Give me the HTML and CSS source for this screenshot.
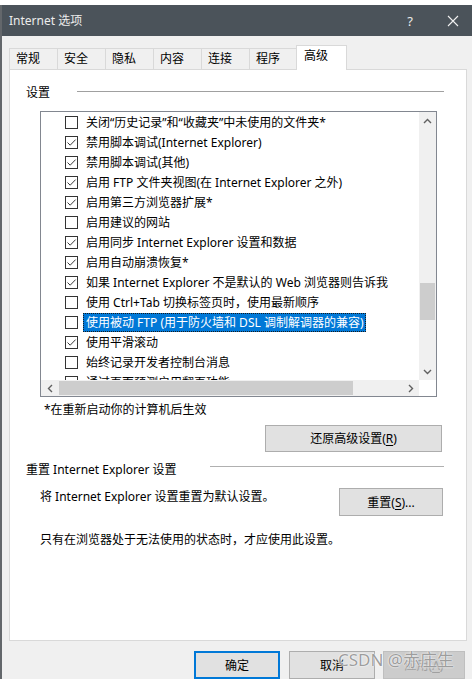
FILE: index.html
```html
<!DOCTYPE html>
<html lang="zh-CN">
<head>
<meta charset="utf-8">
<title>Internet 选项</title>
<link rel="stylesheet" href="styles.css">
</head>
<body>
<div class="topgap"></div>
<div class="window">
  <div class="titlebar">
    <span class="title">Internet 选项</span>
    <span class="help">?</span>
    <span class="close"><svg width="12" height="12" viewBox="0 0 12 12"><path d="M1 1 L11 11 M11 1 L1 11" stroke="#f2f2f2" stroke-width="1.1" fill="none"/></svg></span>
  </div>
  <div class="client">
    <div class="tabs">
      <div class="tab">常规</div>
      <div class="tab">安全</div>
      <div class="tab">隐私</div>
      <div class="tab">内容</div>
      <div class="tab">连接</div>
      <div class="tab">程序</div>
      <div class="tab tab-active">高级</div>
    </div>
    <div class="panel">
      <div class="group-head g1"><span>设置</span><i class="rule"></i></div>
      <div class="listbox">
        <div class="list-view">
          <div class="row"><span class="cb"></span><span class="lbl">关闭“历史记录”和“收藏夹”中未使用的文件夹*</span></div>
          <div class="row"><span class="cb on"><svg width="11" height="11" viewBox="0 0 11 11"><path d="M1.5 5.5 L4.2 8.2 L9.6 2.6" stroke="#3a3a3a" stroke-width="1" fill="none"/></svg></span><span class="lbl">禁用脚本调试(Internet Explorer)</span></div>
          <div class="row"><span class="cb on"><svg width="11" height="11" viewBox="0 0 11 11"><path d="M1.5 5.5 L4.2 8.2 L9.6 2.6" stroke="#3a3a3a" stroke-width="1" fill="none"/></svg></span><span class="lbl">禁用脚本调试(其他)</span></div>
          <div class="row"><span class="cb on"><svg width="11" height="11" viewBox="0 0 11 11"><path d="M1.5 5.5 L4.2 8.2 L9.6 2.6" stroke="#3a3a3a" stroke-width="1" fill="none"/></svg></span><span class="lbl">启用 FTP 文件夹视图(在 Internet Explorer 之外)</span></div>
          <div class="row"><span class="cb on"><svg width="11" height="11" viewBox="0 0 11 11"><path d="M1.5 5.5 L4.2 8.2 L9.6 2.6" stroke="#3a3a3a" stroke-width="1" fill="none"/></svg></span><span class="lbl">启用第三方浏览器扩展*</span></div>
          <div class="row"><span class="cb"></span><span class="lbl">启用建议的网站</span></div>
          <div class="row"><span class="cb on"><svg width="11" height="11" viewBox="0 0 11 11"><path d="M1.5 5.5 L4.2 8.2 L9.6 2.6" stroke="#3a3a3a" stroke-width="1" fill="none"/></svg></span><span class="lbl">启用同步 Internet Explorer 设置和数据</span></div>
          <div class="row"><span class="cb on"><svg width="11" height="11" viewBox="0 0 11 11"><path d="M1.5 5.5 L4.2 8.2 L9.6 2.6" stroke="#3a3a3a" stroke-width="1" fill="none"/></svg></span><span class="lbl">启用自动崩溃恢复*</span></div>
          <div class="row"><span class="cb on"><svg width="11" height="11" viewBox="0 0 11 11"><path d="M1.5 5.5 L4.2 8.2 L9.6 2.6" stroke="#3a3a3a" stroke-width="1" fill="none"/></svg></span><span class="lbl">如果 Internet Explorer 不是默认的 Web 浏览器则告诉我</span></div>
          <div class="row"><span class="cb"></span><span class="lbl">使用 Ctrl+Tab 切换标签页时，使用最新顺序</span></div>
          <div class="row"><span class="cb"></span><span class="lbl selected">使用被动 FTP (用于防火墙和 DSL 调制解调器的兼容)</span></div>
          <div class="row"><span class="cb on"><svg width="11" height="11" viewBox="0 0 11 11"><path d="M1.5 5.5 L4.2 8.2 L9.6 2.6" stroke="#3a3a3a" stroke-width="1" fill="none"/></svg></span><span class="lbl">使用平滑滚动</span></div>
          <div class="row"><span class="cb"></span><span class="lbl">始终记录开发者控制台消息</span></div>
          <div class="row"><span class="cb"></span><span class="lbl">通过页面预测启用翻页功能</span></div>
        </div>
        <div class="vscroll">
          <div class="sbtn"><svg width="9" height="6" viewBox="0 0 9 6"><path d="M1 5 L4.5 1.5 L8 5" stroke="#606060" stroke-width="1.4" fill="none"/></svg></div>
          <div class="vtrack"><div class="vthumb"></div></div>
          <div class="sbtn"><svg width="9" height="6" viewBox="0 0 9 6"><path d="M1 1 L4.5 4.5 L8 1" stroke="#606060" stroke-width="1.4" fill="none"/></svg></div>
        </div>
        <div class="hscroll">
          <div class="sbtn"><svg width="6" height="9" viewBox="0 0 6 9"><path d="M5 1 L1.5 4.5 L5 8" stroke="#606060" stroke-width="1.4" fill="none"/></svg></div>
          <div class="htrack"><div class="hthumb"></div></div>
          <div class="sbtn"><svg width="6" height="9" viewBox="0 0 6 9"><path d="M1 1 L4.5 4.5 L1 8" stroke="#606060" stroke-width="1.4" fill="none"/></svg></div>
        </div>
        <div class="corner"></div>
      </div>
      <div class="note">*在重新启动你的计算机后生效</div>
      <div class="btn-row"><button class="btn btn-restore">还原高级设置(<u>R</u>)</button></div>
      <div class="group-head g2"><span>重置 Internet Explorer 设置</span><i class="rule"></i></div>
      <div class="reset-row"><span class="reset-text">将 Internet Explorer 设置重置为默认设置。</span><button class="btn btn-reset">重置(<u>S</u>)...</button></div>
      <div class="hint">只有在浏览器处于无法使用的状态时，才应使用此设置。</div>
    </div>
    <div class="footer">
      <button class="btn fbtn btn-ok">确定</button>
      <button class="btn fbtn btn-cancel">取消</button>
      <button class="btn fbtn btn-apply" disabled>应用(<u>A</u>)</button>
    </div>
  </div>
</div>
<div class="watermark">CSDN @赤庄生</div>
</body>
</html>
```

FILE: styles.css
```css
* { box-sizing: border-box; }
html, body {
  margin: 0;
  padding: 0;
  width: 472px;
  height: 679px;
  overflow: hidden;
  background: #ffffff;
}
body {
  font-family: "Noto Sans", "Noto Sans CJK SC", sans-serif;
  font-size: 12px;
  color: #000;
  position: relative;
}
.topgap { height: 5px; background: #ffffff; }
.window {
  height: 674px;
  display: flex;
  flex-direction: column;
  border-left: 2px solid #63676b;
  background: #f0f0f0;
  overflow: hidden;
}
.titlebar {
  height: 31px;
  flex: none;
  background: #4b535a;
  display: flex;
  align-items: center;
  margin-left: -2px;
  padding-left: 9px;
  color: #ececec;
}
.title { font-size: 12px; line-height: 17px; flex: 1; }
.help {
  font-size: 13px;
  width: 16px;
  text-align: center;
  margin-right: 29px;
}
.close { width: 12px; height: 12px; display: flex; margin-right: 13px; }
.client {
  flex: 1;
  padding: 9px 5px 0 7px;
  display: flex;
  flex-direction: column;
}
.tabs {
  height: 24px;
  display: flex;
  align-items: flex-end;
}
.tab {
  width: 48px;
  height: 21px;
  border: 1px solid #d9d9d9;
  border-right: none;
  border-bottom: none;
  padding: 0 6px;
  line-height: 20px;
  background: #f0f0f0;
}
.tab-active {
  width: 51px;
  height: 25px;
  margin-left: -1px;
  margin-bottom: -1px;
  border-right: 1px solid #d9d9d9;
  background: #ffffff;
  position: relative;
  z-index: 1;
  padding: 0 7px;
  line-height: 20px;
}
.panel {
  width: 458px;
  height: 572px;
  flex: none;
  background: #ffffff;
  border: 1px solid #d9d9d9;
  display: flex;
  flex-direction: column;
}
.group-head {
  display: flex;
  align-items: center;
  height: 17px;
  line-height: 17px;
  padding-left: 16px;
  padding-right: 22px;
}
.g1 { margin-top: 14px; }
.g2 { margin-top: 9px; }
.rule {
  flex: 1;
  height: 1px;
  background: #a0a0a0;
  margin-bottom: 3px;
}
.g1 .rule { margin-left: 27px; }
.g2 .rule { margin-left: 33px; margin-bottom: 6px; background: #b0b0b0; }
.listbox {
  margin-top: 10px;
  margin-left: 30px;
  width: 397px;
  height: 286px;
  border: 1px solid #828790;
  display: grid;
  grid-template-columns: 378px 17px;
  grid-template-rows: 268px 16px;
}
.list-view {
  overflow: hidden;
  background: #ffffff;
}
.row {
  height: 20px;
  display: flex;
  align-items: center;
  padding-left: 24px;
  white-space: nowrap;
}
.cb {
  width: 13px;
  height: 13px;
  flex: none;
  border: 1px solid #333333;
  background: #ffffff;
  display: flex;
  align-items: center;
  justify-content: center;
}
.lbl {
  margin-left: 5px;
  padding: 0 2px;
  line-height: 17px;
  border: 1px solid transparent;
}
.selected {
  background: #0078d7;
  color: #ffffff;
  border: 1px dotted #1a1a1a;
}
.vscroll {
  background: #f0f0f0;
  display: flex;
  flex-direction: column;
}
.sbtn {
  width: 17px;
  height: 17px;
  flex: none;
  display: flex;
  align-items: center;
  justify-content: center;
}
.vtrack { flex: 1; }
.vthumb {
  margin-top: 154px;
  margin-left: 1px;
  width: 15px;
  height: 37px;
  background: #cdcdcd;
}
.hscroll {
  background: #f0f0f0;
  display: flex;
  align-items: center;
  height: 16px;
}
.hscroll .sbtn { height: 16px; }
.htrack { flex: 1; height: 16px; display: flex; align-items: center; }
.hthumb {
  margin-left: 1px;
  width: 294px;
  height: 14px;
  background: #cdcdcd;
}
.corner { background: #ffffff; }
.note {
  margin-top: 4px;
  margin-left: 34px;
  line-height: 17px;
}
.btn-row {
  display: flex;
  justify-content: flex-end;
  padding-right: 24px;
  margin-top: 7px;
}
.btn {
  font-family: "Noto Sans", "Noto Sans CJK SC", sans-serif;
  font-size: 12px;
  color: #000;
  background: #e1e1e1;
  border: 1px solid #adadad;
  padding: 0;
  margin: 0;
  line-height: 17px;
  display: flex;
  align-items: center;
  justify-content: center;
}
.btn u { text-underline-offset: 2px; }
.btn-restore { width: 177px; height: 27px; }
.reset-row {
  display: flex;
  align-items: flex-start;
  margin-top: 10px;
  padding-left: 30px;
  padding-right: 23px;
}
.reset-text { flex: 1; line-height: 17px; }
.btn-reset { width: 104px; height: 28px; }
.hint {
  margin-top: 15px;
  margin-left: 30px;
  line-height: 17px;
}
.footer {
  display: flex;
  justify-content: flex-end;
  margin-top: 10px;
  padding-right: 2px;
}
.fbtn { height: 28px; }
.btn-ok {
  width: 86px;
  border: 2px solid #0078d7;
}
.btn-cancel { width: 86px; margin-left: 9px; }
.btn-apply {
  width: 82px;
  margin-left: 8px;
  background: #cccccc;
  border-color: #bfbfbf;
  color: #a0a0a0;
}
.watermark {
  position: absolute;
  left: 338px;
  top: 649px;
  font-family: "Noto Sans", "Noto Sans CJK SC", sans-serif;
  font-size: 17px;
  line-height: 22px;
  color: rgba(140, 140, 140, 0.85);
  text-shadow: 0 0 2px #ffffff, 0 0 1px #ffffff;
  white-space: nowrap;
}
```
